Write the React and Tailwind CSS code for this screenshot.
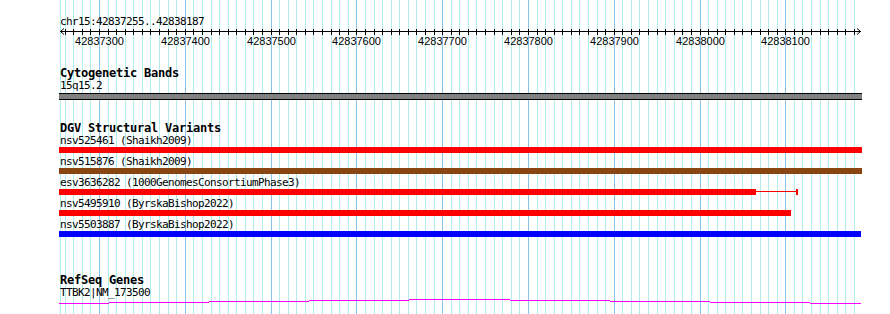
import React from "react";

const START = 42837255;
const SCALE = 0.8579;
const X0 = 60.4;
const px = (bp) => X0 + (bp - START) * SCALE;

const gridLines = [];
for (let bp = 42837260; bp <= 42838180; bp += 10) gridLines.push(bp);
const majors = gridLines.filter((bp) => bp % 100 === 0);

const variants = [
  { label: "nsv525461 (Shaikh2009)", color: "#ff0000", width: 803 },
  { label: "nsv515876 (Shaikh2009)", color: "#8b4513", width: 803 },
  { label: "esv3636282 (1000GenomesConsortiumPhase3)", color: "#ff0000", width: 697, whisker: 42 },
  { label: "nsv5495910 (ByrskaBishop2022)", color: "#ff0000", width: 732 },
  { label: "nsv5503887 (ByrskaBishop2022)", color: "#0000ff", width: 802 },
];

// step outline of the gene model (x from, x to, y)
const geneSteps = [
  [59, 109, 4],
  [109, 209, 3],
  [209, 309, 2],
  [309, 409, 1],
  [409, 510, 0],
  [510, 610, 1],
  [610, 710, 2],
  [710, 810, 3],
  [810, 861, 4],
];

function Grid() {
  return (
    <svg className="absolute inset-0" width="890" height="314" shapeRendering="crispEdges">
      <line x1="60.5" y1="0" x2="60.5" y2="314" stroke="#afeeee" />
      {gridLines.map((bp) => {
        const x = Math.round(px(bp)) + 0.5;
        const major = bp % 100 === 0;
        return (
          <line key={bp} x1={x} y1="0" x2={x} y2="314" stroke={major ? "#87c3ec" : "#afeeee"} />
        );
      })}
    </svg>
  );
}

function Ruler() {
  return (
    <div className="relative h-[20px] w-[803px]">
      <svg className="absolute left-0 top-0" width="803" height="10" shapeRendering="crispEdges">
        <line x1="1" y1="4.5" x2="802" y2="4.5" stroke="#000" />
        <polyline points="5,1.5 1.5,4.5 5,7.5" fill="none" stroke="#000" shapeRendering="auto" />
        <polyline points="798,1.5 801.5,4.5 798,7.5" fill="none" stroke="#000" shapeRendering="auto" />
        {gridLines.map((bp) => {
          const x = Math.round(px(bp)) - 59 + 0.5;
          return <line key={bp} x1={x} y1="2" x2={x} y2="8" stroke="#000" />;
        })}
      </svg>
      {majors.map((bp) => (
        <span
          key={bp}
          className="absolute top-[9px] -translate-x-1/2 font-['Liberation_Sans',sans-serif] text-[11px] leading-[10px] text-black"
          style={{ left: Math.round(px(bp)) - 59 + 0.5 }}
        >
          {bp}
        </span>
      ))}
    </div>
  );
}

function Label({ children, className = "" }) {
  return (
    <div className={"h-[10px] pl-[1px] text-[11px] leading-[10px] tracking-[-0.62px] whitespace-nowrap " + className}>
      {children}
    </div>
  );
}

function Heading({ children, className = "" }) {
  return (
    <div className={"h-[10px] pl-[1px] text-[12px] font-bold leading-[9px] tracking-[-0.22px] whitespace-nowrap " + className}>
      {children}
    </div>
  );
}

export default function App() {
  return (
    <div className="relative h-[314px] w-[890px] overflow-hidden bg-white font-['DejaVu_Sans_Mono','Liberation_Mono',monospace] text-black">
      <Grid />
      <div className="relative flex flex-col pl-[59px]">
        <Label className="mt-[17px]">chr15:42837255..42838187</Label>
        <Ruler />

        <Heading className="mt-[22px]">Cytogenetic Bands</Heading>
        <Label className="mt-[2px]">15q15.2</Label>
        <div className="mt-[2px] h-[7px] w-[803px] border-y border-black bg-[#808080]" />

        <Heading className="mt-[24px]">DGV Structural Variants</Heading>
        <div className="mt-[2px] flex flex-col gap-[4px]">
          {variants.map((v) => (
            <div key={v.label} className="flex flex-col gap-[1px]">
              <Label>{v.label}</Label>
              <div className="flex h-[6px] items-center">
                <div className="h-[6px]" style={{ width: v.width, backgroundColor: v.color }} />
                {v.whisker && (
                  <svg width={v.whisker} height="6" shapeRendering="crispEdges">
                    <line x1="0" y1="2.5" x2={v.whisker} y2="2.5" stroke={v.color} />
                    <rect x={v.whisker - 2} y="0" width="2" height="6" fill={v.color} />
                  </svg>
                )}
              </div>
            </div>
          ))}
        </div>

        <Heading className="mt-[39px]">RefSeq Genes</Heading>
        <Label className="mt-[2px]">TTBK2|NM_173500</Label>
        <svg className="mt-[1px]" width="803" height="5" shapeRendering="crispEdges">
          {geneSteps.map(([a, b, y]) => (
            <line key={a} x1={a - 59} y1={y + 0.5} x2={b - 59} y2={y + 0.5} stroke="#ff00ff" />
          ))}
        </svg>
      </div>
    </div>
  );
}
